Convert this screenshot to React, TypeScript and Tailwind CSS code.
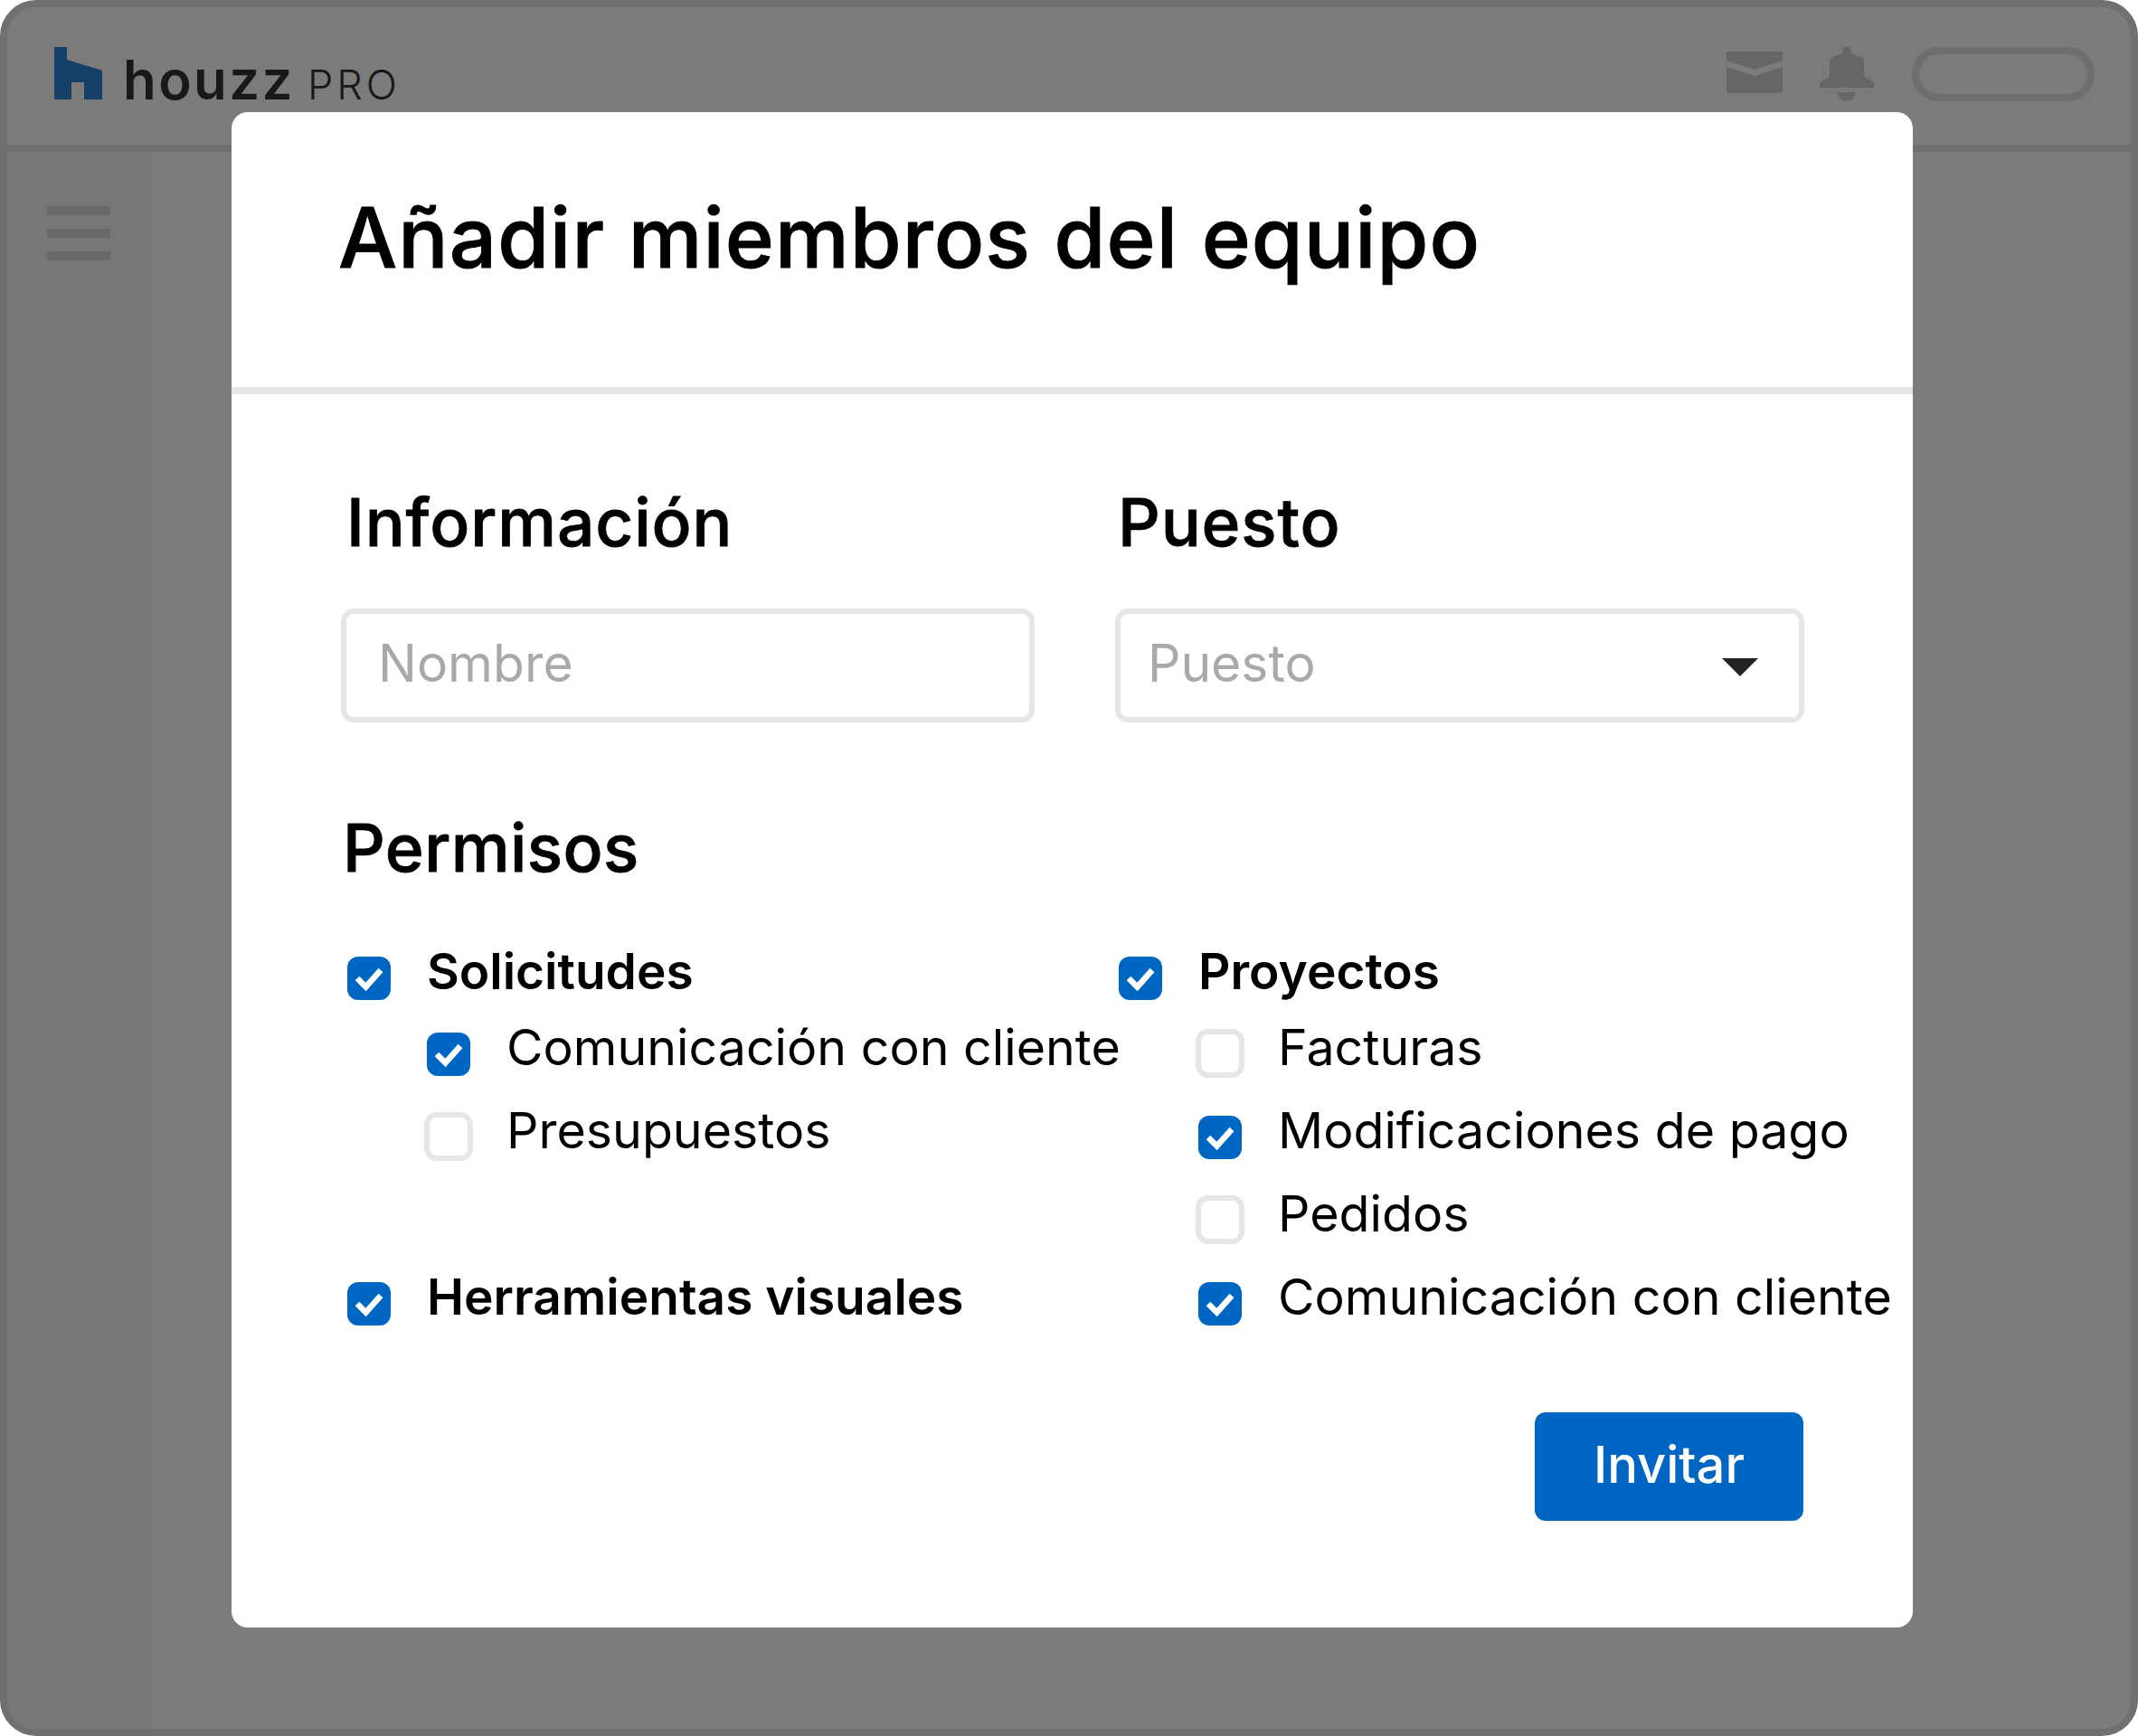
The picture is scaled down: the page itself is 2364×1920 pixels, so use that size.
import { ReactNode } from 'react'

const font = "font-['Inter','Liberation_Sans',sans-serif]"

function CheckBox({ checked }: { checked: boolean }) {
  if (!checked) {
    return (
      <span className="-mx-[3px] mt-[13px] block size-[54px] shrink-0 rounded-[14px] border-[6px] border-[#e6e6e6] bg-white" />
    )
  }
  return (
    <span className="mt-[16px] block size-[48px] shrink-0 rounded-[12px] bg-[#0066c4]">
      <svg viewBox="0 0 48 48" className="size-[48px]" fill="none">
        <path d="M11 24l9.5 9.5L37 15" stroke="#fff" strokeWidth="6.5" />
      </svg>
    </span>
  )
}

function Option({
  bold,
  checked,
  children,
  nested,
  rowClass = 'h-[92px]',
}: {
  bold?: boolean
  checked: boolean
  children: ReactNode
  nested?: boolean
  rowClass?: string
}) {
  return (
    <div className={`flex items-center gap-[40px] ${rowClass} ${nested ? 'pl-[88px]' : ''}`}>
      <CheckBox checked={checked} />
      <span
        className={`whitespace-nowrap leading-none text-black ${bold ? 'text-[55px] font-semibold' : 'text-[55.5px] font-normal'}`}
      >
        {children}
      </span>
    </div>
  )
}

function Field({ label, arrow, className }: { label: string; arrow?: boolean; className: string }) {
  return (
    <div
      className={`flex h-[126px] items-center justify-between rounded-[14px] border-[6px] border-[#e6e6e6] bg-white pb-[4px] text-[57px] text-[#a9a9a9] ${className}`}
    >
      {label}
      {arrow ? (
        <svg viewBox="0 0 40 20" className="mr-[45px] mt-[8px] h-[20px] w-[40px]">
          <path d="M0 0H40L20 20Z" fill="#222" />
        </svg>
      ) : null}
    </div>
  )
}

function Logo() {
  return (
    <div className="flex items-end">
      <svg viewBox="0 0 53 58" className="h-[58px] w-[53px]">
        <path d="M0 0H14V14L53 26V58H33V39H19V58H0Z" fill="#143f66" />
      </svg>
      <span className="ml-[23px] text-[60px] font-semibold leading-[44px] tracking-[0.04em] text-[#181818]">houzz</span>
      <span className="ml-[14px] text-[45px] font-light leading-[33px] tracking-[0.09em] text-[#181818]">PRO</span>
    </div>
  )
}

export default function App() {
  return (
    <div className={`relative h-[1920px] w-[2364px] bg-white ${font}`}>
      <div className="flex h-full flex-col overflow-hidden rounded-[40px] border-[8px] border-[#707070] bg-[#7b7b7b]">
        <header className="flex h-[160px] shrink-0 items-start justify-between border-b-[8px] border-[#707070] pl-[52px] pr-[40px] pt-[44px]">
          <Logo />
          <div className="flex items-start">
            <svg viewBox="0 0 62 46" className="mt-[5px] h-[46px] w-[62px]" fill="#666">
              <path d="M0 0H62V10L31 20L0 10Z" />
              <path d="M0 17L31 27L62 17V43a3 3 0 0 1-3 3H3a3 3 0 0 1-3-3Z" />
            </svg>
            <svg viewBox="0 0 60 60" className="ml-[41px] h-[60px] w-[60px]" fill="#666">
              <path d="M26 6a4.5 4.5 0 1 1 8 0L46 11.5Q49 13 49 16V33L60 39V45H0V39L11 33V16Q11 13 14 11.5Z" />
              <path d="M20 50H39.5A9.7 9.7 0 0 1 20 50Z" />
            </svg>
            <div className="ml-[42px] h-[60px] w-[202px] rounded-full border-[8px] border-[#6e6e6e]" />
          </div>
        </header>
        <div className="flex min-h-0 flex-1">
          <aside className="flex w-[160px] flex-col gap-[15px] bg-[#777777] pl-[44px] pt-[60px]">
            <span className="h-[10px] w-[70px] bg-[#696969]" />
            <span className="h-[10px] w-[70px] bg-[#696969]" />
            <span className="h-[10px] w-[70px] bg-[#696969]" />
          </aside>
          <main className="flex-1" />
        </div>
      </div>

      <div className="absolute left-[256px] top-[124px] h-[1676px] w-[1859px] rounded-[18px] bg-white">
        <div className="h-[312px] border-b-[8px] border-[#e6e6e6] pl-[118px] pt-[85px]">
          <h1 className="text-[92px] font-medium leading-[108px] tracking-[0.012em] text-black [-webkit-text-stroke:1px_black]">Añadir miembros del equipo</h1>
        </div>
        <div className="grid grid-cols-[856px_762px] pl-[121px] pt-[98px]">
          <div>
            <h2 className="pl-[6px] text-[73px] font-medium leading-[88px] tracking-[0.012em] text-black [-webkit-text-stroke:0.8px_black]">Información</h2>
            <Field label="Nombre" className="mt-[51px] w-[767px] pl-[35px]" />
          </div>
          <div>
            <h2 className="pl-[3px] text-[73px] font-medium leading-[88px] tracking-[0.012em] text-black [-webkit-text-stroke:0.8px_black]">Puesto</h2>
            <Field label="Puesto" arrow className="mt-[51px] w-[762px] pl-[30px]" />
          </div>
        </div>
        <h2 className="mt-[95px] pl-[123px] text-[73px] font-medium leading-[88px] tracking-[0.006em] text-black [-webkit-text-stroke:0.8px_black]">Permisos</h2>
        <div className="mt-[54px] grid grid-cols-[853px_1fr] pl-[128px]">
          <div>
            <Option bold checked rowClass="h-[76px]">Solicitudes</Option>
            <Option nested checked>Comunicación con cliente</Option>
            <Option nested checked={false}>Presupuestos</Option>
            <div className="h-[92px]" />
            <Option bold checked>Herramientas visuales</Option>
          </div>
          <div>
            <Option bold checked rowClass="h-[76px]">Proyectos</Option>
            <Option nested checked={false}>Facturas</Option>
            <Option nested checked>Modificaciones de pago</Option>
            <Option nested checked={false}>Pedidos</Option>
            <Option nested checked>Comunicación con cliente</Option>
          </div>
        </div>
        <div className="mt-[82px] flex justify-end pr-[121px]">
          <button className="flex h-[120px] w-[297px] items-center justify-center rounded-[12px] bg-[#0066c4] pb-[4px] text-[56px] font-medium text-white">
            Invitar
          </button>
        </div>
      </div>
    </div>
  )
}
